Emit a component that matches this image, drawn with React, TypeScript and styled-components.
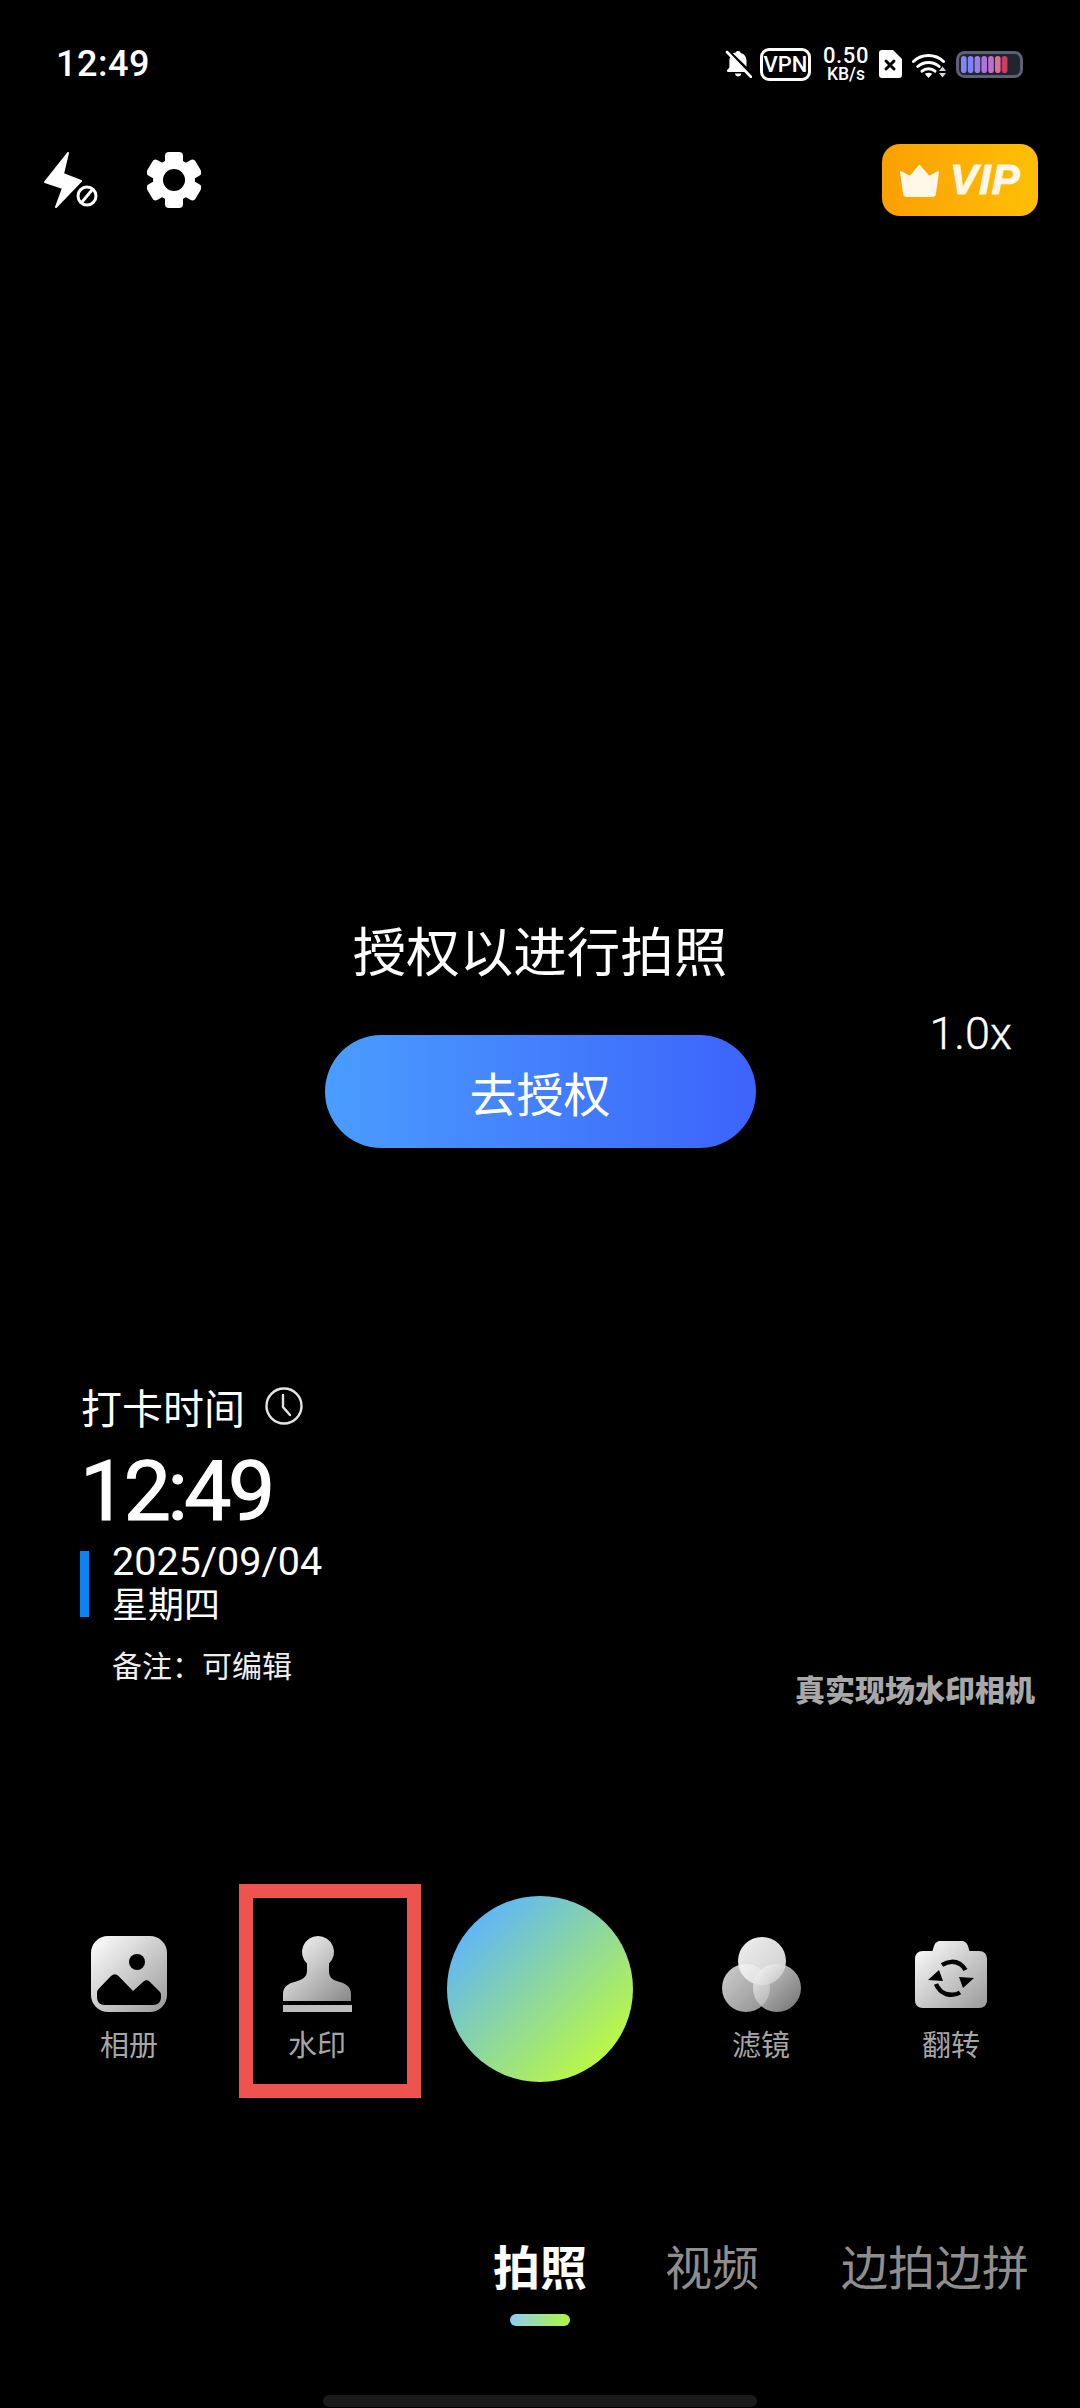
import React from "react";
import styled, { createGlobalStyle } from "styled-components";

const GlobalStyle = createGlobalStyle`
    html, body {
        margin: 0;
        background: #000;
    }
    * {
        box-sizing: border-box;
    }
`

const Page = styled.div`
    width: 1080px;
    height: 2408px;
    display: flex;
    flex-direction: column;
    overflow: hidden;
    background: #000;
    color: #fff;
    font-family: Roboto, "Noto Sans CJK SC", sans-serif;
`

const StatusBar = styled.div`
    height: 48px;
    margin-top: 40px;
    padding: 0 57px 0 56px;
    display: flex;
    align-items: center;
    justify-content: space-between;
`
const Clock = styled.span`
    font-size: 36px;
    font-weight: 500;
    letter-spacing: 0.5px;
`
const StatusIcons = styled.div`
    display: flex;
    align-items: center;
`
const VpnBox = styled.span`
    width: 51px;
    height: 33px;
    margin: 0 11px 0 8px;
    border: 3px solid #fff;
    border-radius: 9px;
    display: flex;
    align-items: center;
    justify-content: center;
    font-size: 22px;
    font-weight: 500;
`
const Speed = styled.div`
    width: 48px;
    margin-right: 8px;
    display: flex;
    flex-direction: column;
    align-items: center;
    font-weight: 500;
`
const SpeedValue = styled.span`
    font-size: 22px;
    line-height: 20px;
    letter-spacing: 0.6px;
`
const SpeedUnit = styled.span`
    font-size: 17.5px;
    line-height: 17px;
`

const TopBar = styled.div`
    height: 72px;
    margin-top: 56px;
    padding: 0 42px 0 44px;
    display: flex;
    align-items: center;
    justify-content: space-between;
`
const TopTools = styled.div`
    display: flex;
    align-items: center;
    gap: 43px;
`
const VipBadge = styled.div`
    width: 156px;
    height: 72px;
    padding-left: 18px;
    border-radius: 18px;
    display: flex;
    align-items: center;
    gap: 11px;
    background: linear-gradient(90deg, #fba003, #febf05);
`
const VipText = styled.span`
    font-family: "Liberation Sans", sans-serif;
    font-size: 42px;
    font-weight: 700;
    font-style: italic;
    letter-spacing: 1px;
    color: #fff8e8;
    -webkit-text-stroke: 1px #fff8e8;
`

const Preview = styled.div`
    flex: 1;
    position: relative;
    display: flex;
    flex-direction: column;
`
const Prompt = styled.div`
    padding-top: 703px;
    display: flex;
    flex-direction: column;
    align-items: center;
`
const PromptTitle = styled.div`
    font-size: 53.5px;
    line-height: 70px;
`
const AuthButton = styled.button`
    width: 431px;
    height: 113px;
    margin-top: 46px;
    border: 0;
    border-radius: 57px;
    font-family: inherit;
    font-size: 47px;
    color: #fff;
    background: linear-gradient(90deg, #4a9dff, #3c63fa);
`
const ZoomLevel = styled.span`
    position: absolute;
    top: 795px;
    right: 68px;
    font-size: 45px;
    line-height: 46px;
    font-weight: 300;
    -webkit-text-stroke: 0.4px #fff;
`
const PreviewFooter = styled.div`
    margin-top: auto;
    padding: 0 45px 171px 80px;
    display: flex;
    align-items: flex-end;
    justify-content: space-between;
`
const Watermark = styled.div`
    margin-bottom: 26px;
    display: flex;
    flex-direction: column;
`
const WatermarkHeading = styled.div`
    height: 50px;
    margin-top: -1px;
    padding-left: 1px;
    display: flex;
    align-items: center;
    gap: 20px;
    font-size: 41px;
`
const WatermarkTime = styled.div`
    margin-top: 19px;
    font-size: 84px;
    line-height: 84px;
    font-weight: 400;
    letter-spacing: -3.5px;
    -webkit-text-stroke: 1.2px #fff;
`
const DateRow = styled.div`
    margin-top: 6px;
    display: flex;
    align-items: center;
    gap: 23px;
`
const AccentBar = styled.div`
    width: 9px;
    height: 66px;
    background: #0a84f2;
`
const DateLine = styled.div<{ $size: number }>`
    font-size: ${(p) => p.$size}px;
    line-height: 44px;
`
const Note = styled.div`
    margin-top: 19px;
    padding-left: 32px;
    font-size: 30px;
    line-height: 40px;
    color: #eee;
`
const Brand = styled.div`
    font-size: 30px;
    line-height: 44px;
    font-weight: 900;
    color: #a8a8a8;
`

const Controls = styled.div`
    height: 214px;
    padding-left: 38px;
    display: flex;
    align-items: center;
`
const ControlItem = styled.div<{ $active?: boolean; $gap?: number }>`
    width: 182px;
    height: 214px;
    padding: 38px ${(p) => (p.$active ? 26 : 0)}px 0 0;
    margin-left: ${(p) => p.$gap ?? 0}px;
    border: 14px solid ${(p) => (p.$active ? "#ef5350" : "transparent")};
    display: flex;
    flex-direction: column;
    align-items: center;
`
const ControlIcon = styled.div`
    height: 76px;
    display: flex;
    align-items: center;
`
const ControlLabel = styled.span`
    margin-top: 14px;
    font-size: 29px;
    line-height: 40px;
    color: #a6a6a6;
`
const Shutter = styled.div`
    width: 186px;
    height: 186px;
    margin: 0 37px 4px 26px;
    flex-shrink: 0;
    border-radius: 50%;
    background: linear-gradient(135deg, #5fb6f8 14%, #bbf845 86%);
`

const Tabs = styled.div`
    margin-top: 141px;
    padding-right: 51px;
    display: flex;
    justify-content: flex-end;
    gap: 82px;
`
const Tab = styled.div<{ $active?: boolean }>`
    margin-right: ${(p) => (p.$active ? -4 : 0)}px;
    display: flex;
    flex-direction: column;
    align-items: center;
    font-size: 47px;
    line-height: 60px;
    font-weight: ${(p) => (p.$active ? 700 : 400)};
    color: ${(p) => (p.$active ? "#fff" : "#8e8e8e")};
`
const TabMarker = styled.div`
    width: 60px;
    height: 12px;
    margin-top: 15px;
    border-radius: 6px;
    background: linear-gradient(90deg, #8fcdf4, #b2f53c);
`
const HomeBar = styled.div`
    width: 434px;
    height: 12px;
    margin: 69px auto 1px;
    border-radius: 6px;
    background: #1a1a1a;
`

const BellOffIcon = () => (
    <svg width="27" height="28" viewBox="0 0 27 28">
        <path fill="#fff" d="M13 1c1.500 0 2.500.8 2.800 2 3.600 1 5.700 4 5.700 7.600v6L8 3.500C9 2.800 10 2.400 11 2.500 11 1.500 12 1 13 1zM5.500 7l14.600 15H3.200c-1.300 0-1.700-1.400-.8-2.200l2-2.200v-7c0-1.500.4-2.600 1.100-3.600zM10 23.400h6.400c-.3 1.900-1.600 3-3.200 3s-2.900-1.100-3.200-3z" />
        <path stroke="#fff" strokeWidth="2.600" strokeLinecap="round" d="M2 2l24 25" />
    </svg>
)

const SimIcon = () => (
    <svg width="24" height="28" viewBox="0 0 24 28" style={{ marginRight: 10 }}>
        <path fill="#fff" d="M4 0h11l9 9v16a3 3 0 0 1-3 3H4a3 3 0 0 1-3-3V3a3 3 0 0 1 3-3z" />
        <path stroke="#000" strokeWidth="3" strokeLinecap="round" d="M8 11l8 8M16 11l-8 8" />
    </svg>
)

const WifiIcon = () => (
    <svg width="36" height="27" viewBox="0 0 36 27" style={{ marginRight: 8 }} fill="none" stroke="#fff" strokeWidth="3" strokeLinecap="round">
        <path d="M1.500 10.500A22 22 0 0 1 31.500 10.500" />
        <path d="M5.800 15.500A16 16 0 0 1 27.200 15.500" />
        <path d="M10 20.200A10 10 0 0 1 23 20.200" />
        <path fill="#fff" stroke="none" d="M12.800 22.800Q16.500 20.600 20.200 22.800L16.500 27z" />
        <path fill="#fff" stroke="none" d="M30.500 15.500l3.500 4.500h-7zM27 22h7l-3.500 4.500z" opacity="0.85" />
    </svg>
)

const BATTERY_CELLS = ["#7f86f6", "#7c84f7", "#9a80e8", "#ac74dc", "#c070cc", "#e06f98", "#c9405f"];

const BatteryIcon = () => (
    <svg width="67" height="27" viewBox="0 0 67 27">
        <rect x="1.500" y="1.500" width="64" height="24" rx="7" fill="#22252e" stroke="#5c6072" strokeWidth="3" />
        {BATTERY_CELLS.map((color, i) => (
            <rect key={color} x={5 + i * 6.8} y="5" width="5.600" height="17" rx="2.800" fill={color} />
        ))}
    </svg>
)

const FlashOffIcon = () => (
    <svg width="60" height="56" viewBox="0 0 60 56">
        <path fill="#fff" stroke="#fff" strokeWidth="2" strokeLinejoin="round" d="M24 1L1 30l18 6-7 19 25-26-18-7z" />
        <circle cx="43" cy="44" r="9" fill="none" stroke="#fff" strokeWidth="3" />
        <path stroke="#fff" strokeWidth="3" d="M38 50l10-12" />
    </svg>
)

const GearIcon = () => (
    <svg width="54" height="56" viewBox="-27 -28 54 56">
        <circle r="21" fill="#fff" />
        {[0, 60, 120, 180, 240, 300].map((angle) => (
            <rect key={angle} x="-9" y="-28" width="18" height="14" rx="4" fill="#fff" transform={`rotate(${angle})`} />
        ))}
        <circle r="11" fill="#000" />
    </svg>
)

const CrownIcon = () => (
    <svg width="39" height="33" viewBox="0 0 39 33">
        <path fill="#fff8e8" stroke="#fff8e8" strokeWidth="2" strokeLinejoin="round" d="M19.500 2L29 13l9-5-3 21c0 2-1 3-3 3H7c-2 0-3-1-3-3L1 8l9 5z" />
    </svg>
)

const ClockOutline = () => (
    <svg width="38" height="38" viewBox="0 0 38 38" fill="none" stroke="#e4e4e4" strokeWidth="2.400">
        <circle cx="19" cy="19" r="17.500" />
        <path strokeLinecap="round" d="M18 8v12l7 8" />
    </svg>
)

const GalleryIcon = () => (
    <svg width="76" height="76" viewBox="0 0 76 76">
        <defs>
            <linearGradient id="galleryFill" x1="0" y1="0" x2="1" y2="1">
                <stop offset="0" stopColor="#fff" />
                <stop offset="1" stopColor="#999" />
            </linearGradient>
        </defs>
        <rect width="76" height="76" rx="17" fill="url(#galleryFill)" />
        <circle cx="46" cy="26" r="8" fill="#000" />
        <path fill="#000" d="M6 57c0-2 .8-3.400 2-4.600L20 40c2.500-2.200 5-2.200 7.500 0L42 55l10-9c2.500-2.200 4.500-2.200 7 0l10 10c.8 1 1 2 1 3.500V61c0 5-3 8-8 8H14c-5 0-8-3-8-8z" />
    </svg>
)

const StampIcon = () => (
    <svg width="69" height="76" viewBox="0 0 69 76">
        <defs>
            <linearGradient id="stampFill" x1="0" y1="0" x2="1" y2="1">
                <stop offset="0" stopColor="#fff" />
                <stop offset="1" stopColor="#888" />
            </linearGradient>
        </defs>
        <path fill="url(#stampFill)" d="M35 0a16 16 0 0 1 11 27.600V35c0 6 3 9 9 10.500 7 1.800 13 4.500 13 12.500v7H0v-7c0-8 6-10.700 13-12.500C19 44 24 41 24 35v-7.400A16 16 0 0 1 35 0z" />
        <rect y="69" width="69" height="7" fill="#bdbdbd" />
    </svg>
)

const FilterIcon = () => (
    <svg width="79" height="75" viewBox="0 0 79 75">
        <defs>
            <linearGradient id="filterTop" x1="0" y1="0" x2="1" y2="1">
                <stop offset="0" stopColor="#fff" />
                <stop offset="1" stopColor="#d8d8d8" />
            </linearGradient>
            <linearGradient id="filterLeft" x1="0" y1="0" x2="1" y2="1">
                <stop offset="0" stopColor="#d0d0d0" />
                <stop offset="1" stopColor="#8e8e8e" />
            </linearGradient>
            <linearGradient id="filterRight" x1="0" y1="0" x2="1" y2="1">
                <stop offset="0" stopColor="#fff" />
                <stop offset="1" stopColor="#8a8a8a" />
            </linearGradient>
        </defs>
        <circle cx="24" cy="51" r="24" fill="url(#filterLeft)" />
        <circle cx="40" cy="24" r="24" fill="url(#filterTop)" opacity="0.94" />
        <circle cx="55" cy="51" r="24" fill="url(#filterRight)" opacity="0.82" />
    </svg>
)

const FlipIcon = () => (
    <svg width="72" height="67" viewBox="0 0 72 67">
        <defs>
            <linearGradient id="flipFill" x1="0" y1="0" x2="1" y2="1">
                <stop offset="0" stopColor="#fff" />
                <stop offset="1" stopColor="#999" />
            </linearGradient>
        </defs>
        <path fill="url(#flipFill)" d="M26 0h20c4 0 6 2 7 5l1.500 5H64c5 0 8 3 8 8v41c0 5-3 8-8 8H8c-5 0-8-3-8-8V18c0-5 3-8 8-8h9.500L19 5c1-3 3-5 7-5z" />
        <path fill="none" stroke="#000" strokeWidth="4.500" d="M27 24c6-4 13-4 18-1 3 2 4.500 4 5.500 6M21 43c2 5 5 8 10 10 6 1.500 11 .5 14-1.500" />
        <path fill="#000" d="M13 39l11-10 4 11zM59 37L48 47l-4-11z" />
    </svg>
)

const App = () => {
    return (
        <Page>
            <GlobalStyle />
            <StatusBar>
                <Clock>12:49</Clock>
                <StatusIcons>
                    <BellOffIcon />
                    <VpnBox>VPN</VpnBox>
                    <Speed>
                        <SpeedValue>0.50</SpeedValue>
                        <SpeedUnit>KB/s</SpeedUnit>
                    </Speed>
                    <SimIcon />
                    <WifiIcon />
                    <BatteryIcon />
                </StatusIcons>
            </StatusBar>

            <TopBar>
                <TopTools>
                    <FlashOffIcon />
                    <GearIcon />
                </TopTools>
                <VipBadge>
                    <CrownIcon />
                    <VipText>VIP</VipText>
                </VipBadge>
            </TopBar>

            <Preview>
                <Prompt>
                    <PromptTitle>授权以进行拍照</PromptTitle>
                    <AuthButton>去授权</AuthButton>
                </Prompt>
                <ZoomLevel>1.0x</ZoomLevel>
                <PreviewFooter>
                    <Watermark>
                        <WatermarkHeading>
                            打卡时间
                            <ClockOutline />
                        </WatermarkHeading>
                        <WatermarkTime>12:49</WatermarkTime>
                        <DateRow>
                            <AccentBar />
                            <div>
                                <DateLine $size={39.5}>2025/09/04</DateLine>
                                <DateLine $size={36}>星期四</DateLine>
                            </div>
                        </DateRow>
                        <Note>备注：可编辑</Note>
                    </Watermark>
                    <Brand>真实现场水印相机</Brand>
                </PreviewFooter>
            </Preview>

            <Controls>
                <ControlItem>
                    <ControlIcon><GalleryIcon /></ControlIcon>
                    <ControlLabel>相册</ControlLabel>
                </ControlItem>
                <ControlItem $gap={19} $active>
                    <ControlIcon><StampIcon /></ControlIcon>
                    <ControlLabel>水印</ControlLabel>
                </ControlItem>
                <Shutter />
                <ControlItem>
                    <ControlIcon><FilterIcon /></ControlIcon>
                    <ControlLabel>滤镜</ControlLabel>
                </ControlItem>
                <ControlItem $gap={8}>
                    <ControlIcon><FlipIcon /></ControlIcon>
                    <ControlLabel>翻转</ControlLabel>
                </ControlItem>
            </Controls>

            <Tabs>
                <Tab $active>
                    拍照
                    <TabMarker />
                </Tab>
                <Tab>视频</Tab>
                <Tab>边拍边拼</Tab>
            </Tabs>
            <HomeBar />
        </Page>
    )
}

export default App;
